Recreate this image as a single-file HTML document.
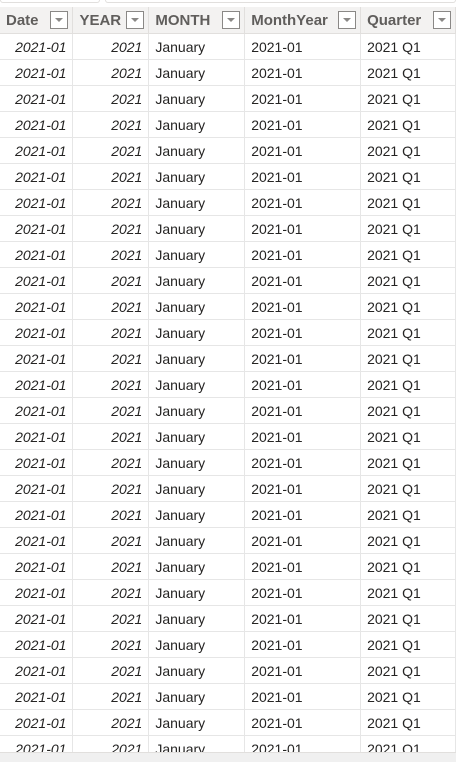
<!DOCTYPE html>
<html><head><style>
body{margin:0;width:456px;height:761px;overflow:hidden;background:#fff;font-family:"Liberation Sans",sans-serif;position:relative}
.top{position:absolute;left:0;top:0;width:456px;height:7px;background:#fff}
.top div{position:absolute;top:0;height:2px;border:1px solid #e1dfdd;border-top:none;border-radius:0 0 3px 3px}
table{position:absolute;left:0;top:7px;border-collapse:collapse;table-layout:fixed}
th{height:26px;background:#f3f2f1;color:#605e5c;font-weight:bold;font-size:15px;text-align:left;padding:0 0 0 6px;border-right:1px solid #e1dfdd;border-bottom:1px solid #e1dfdd;position:relative;white-space:nowrap}
th span.dd{position:absolute;right:4px;top:4px;width:18px;height:18px;box-sizing:border-box;border:1px solid #8a8886;background:#fff}
th span.dd:after{content:"";position:absolute;left:4px;top:6px;border-left:4px solid transparent;border-right:4px solid transparent;border-top:4px solid #8a8886}
td{height:25px;font-size:14px;color:#252423;border-right:1px solid #e6e6e6;border-bottom:1px solid #e6e6e6;padding:0 6px;white-space:nowrap;overflow:hidden}
td.i{font-style:italic;text-align:right}
.sb{position:absolute;left:0;top:752px;width:456px;height:9px;background:#f0f0f0;border-top:1px solid #e1dfdd}
</style></head><body>
<div class="top"><div style="left:0;width:98px"></div><div style="left:105px;width:349px"></div></div>
<table>
<colgroup><col style="width:73px"><col style="width:76px"><col style="width:96px"><col style="width:116px"><col style="width:95px"></colgroup>
<tr><th>Date<span class="dd"></span></th><th>YEAR<span class="dd"></span></th><th>MONTH<span class="dd"></span></th><th>MonthYear<span class="dd"></span></th><th>Quarter<span class="dd"></span></th></tr>
<tbody id="b">
</tbody></table>
<div class="sb"></div>
<script>
var h='';for(var i=0;i<28;i++)h+='<tr><td class="i">2021-01</td><td class="i">2021</td><td>January</td><td>2021-01</td><td>2021 Q1</td></tr>';
document.getElementById('b').innerHTML=h;
</script>
</body></html>
